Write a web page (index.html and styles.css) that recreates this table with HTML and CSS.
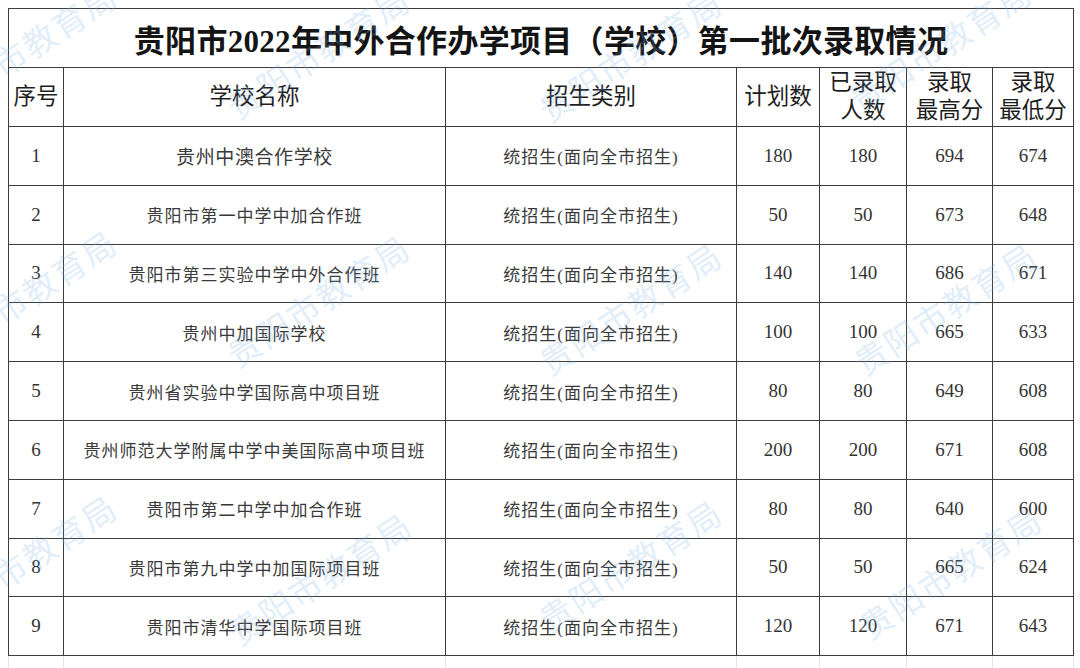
FILE: index.html
```html
<!DOCTYPE html>
<html lang="zh-CN">
<head>
<meta charset="utf-8">
<title>贵阳市2022年中外合作办学项目（学校）第一批次录取情况</title>
<link rel="stylesheet" href="styles.css">
</head>
<body>
<div class="page">
  <table class="sheet">
    <colgroup>
      <col class="c-no"><col class="c-name"><col class="c-type"><col class="c-plan"><col class="c-got"><col class="c-max"><col class="c-min">
    </colgroup>
    <tr class="title-row"><td colspan="7" class="title">贵阳市2022年中外合作办学项目（学校）第一批次录取情况</td></tr>
    <tr class="head-row">
      <th>序号</th><th>学校名称</th><th>招生类别</th><th>计划数</th><th>已录取<br>人数</th><th>录取<br>最高分</th><th>录取<br>最低分</th>
    </tr>
    <tr class="row"><td class="n">1</td><td class="name big">贵州中澳合作学校</td><td class="type">统招生(面向全市招生)</td><td class="n">180</td><td class="n">180</td><td class="n">694</td><td class="n">674</td></tr>
    <tr class="row"><td class="n">2</td><td class="name">贵阳市第一中学中加合作班</td><td class="type">统招生(面向全市招生)</td><td class="n">50</td><td class="n">50</td><td class="n">673</td><td class="n">648</td></tr>
    <tr class="row"><td class="n">3</td><td class="name">贵阳市第三实验中学中外合作班</td><td class="type">统招生(面向全市招生)</td><td class="n">140</td><td class="n">140</td><td class="n">686</td><td class="n">671</td></tr>
    <tr class="row"><td class="n">4</td><td class="name">贵州中加国际学校</td><td class="type">统招生(面向全市招生)</td><td class="n">100</td><td class="n">100</td><td class="n">665</td><td class="n">633</td></tr>
    <tr class="row"><td class="n">5</td><td class="name">贵州省实验中学国际高中项目班</td><td class="type">统招生(面向全市招生)</td><td class="n">80</td><td class="n">80</td><td class="n">649</td><td class="n">608</td></tr>
    <tr class="row"><td class="n">6</td><td class="name">贵州师范大学附属中学中美国际高中项目班</td><td class="type">统招生(面向全市招生)</td><td class="n">200</td><td class="n">200</td><td class="n">671</td><td class="n">608</td></tr>
    <tr class="row"><td class="n">7</td><td class="name">贵阳市第二中学中加合作班</td><td class="type">统招生(面向全市招生)</td><td class="n">80</td><td class="n">80</td><td class="n">640</td><td class="n">600</td></tr>
    <tr class="row"><td class="n">8</td><td class="name">贵阳市第九中学中加国际项目班</td><td class="type">统招生(面向全市招生)</td><td class="n">50</td><td class="n">50</td><td class="n">665</td><td class="n">624</td></tr>
    <tr class="row"><td class="n">9</td><td class="name">贵阳市清华中学国际项目班</td><td class="type">统招生(面向全市招生)</td><td class="n">120</td><td class="n">120</td><td class="n">671</td><td class="n">643</td></tr>
    <tr class="ghost"><td></td><td></td><td></td><td></td><td></td><td></td><td></td></tr>
  </table>

  <div class="wm-layer" aria-hidden="true">
    <span class="wm wm1">贵阳市教育局</span>
    <span class="wm wm2">贵阳市教育局</span>
    <span class="wm wm3">贵阳市教育局</span>
    <span class="wm wm4">贵阳市教育局</span>
    <span class="wm wm5">贵阳市教育局</span>
    <span class="wm wm6">贵阳市教育局</span>
    <span class="wm wm7">贵阳市教育局</span>
    <span class="wm wm8">贵阳市教育局</span>
    <span class="wm wm9">贵阳市教育局</span>
    <span class="wm wm10">贵阳市教育局</span>
    <span class="wm wm11">贵阳市教育局</span>
    <span class="wm wm12">贵阳市教育局</span>
  </div>
</div>
</body>
</html>
```

FILE: styles.css
```css
html, body {
  margin: 0;
  padding: 0;
  background: #ffffff;
}

.page {
  position: relative;
  width: 1080px;
  height: 668px;
  overflow: hidden;
  background: #ffffff;
  padding: 8px 0 0 8px;
  box-sizing: border-box;
}

.sheet {
  border-collapse: collapse;
  table-layout: fixed;
  width: 1065px;
  font-family: "Liberation Serif", "Noto Sans CJK SC", serif;
  color: #333333;
}

.c-no { width: 55px; }
.c-name { width: 382px; }
.c-type { width: 291px; }
.c-plan { width: 83px; }
.c-got { width: 87px; }
.c-max { width: 86px; }
.c-min { width: 81px; }

.sheet td, .sheet th {
  border: 1.5px solid #3c3c3c;
  padding: 0;
  text-align: center;
  vertical-align: middle;
  overflow: hidden;
  white-space: nowrap;
}

.title-row { height: 59px; }

.title {
  font-size: 31px;
  font-weight: 700;
  color: #141414;
  letter-spacing: 0.3px;
  padding-top: 2px;
}

.head-row { height: 59px; }

.head-row th {
  font-size: 22.5px;
  font-weight: 400;
  line-height: 28px;
  color: #1e1e1e;
}

.row { height: 58.8px; }

.n {
  font-size: 19px;
  color: #333333;
}

.name {
  font-size: 17px;
  letter-spacing: 1px;
  color: #3a3a3a;
}

.name.big {
  font-size: 19px;
  letter-spacing: 0.6px;
}

.type {
  font-size: 17px;
  letter-spacing: 1px;
  color: #3a3a3a;
}

.ghost { height: 40px; }

.ghost td {
  border-color: #e4e4e4;
  border-top: 1.5px solid #3c3c3c;
}

.wm-layer {
  position: absolute;
  inset: 0;
  pointer-events: none;
}

.wm {
  position: absolute;
  width: 220px;
  margin-left: -110px;
  margin-top: -20px;
  text-align: center;
  font-family: "Noto Sans CJK SC", sans-serif;
  font-size: 33px;
  line-height: 40px;
  letter-spacing: 2px;
  color: rgba(120, 178, 228, 0.24);
  transform: rotate(-33deg);
  white-space: nowrap;
}

.wm1 { left: 25px; top: 48px; }
.wm2 { left: 318px; top: 52px; }
.wm3 { left: 630px; top: 55px; }
.wm4 { left: 940px; top: 45px; }
.wm5 { left: 25px; top: 295px; }
.wm6 { left: 318px; top: 300px; }
.wm7 { left: 630px; top: 308px; }
.wm8 { left: 945px; top: 308px; }
.wm9 { left: 25px; top: 560px; }
.wm10 { left: 320px; top: 578px; }
.wm11 { left: 630px; top: 565px; }
.wm12 { left: 950px; top: 572px; }
```
